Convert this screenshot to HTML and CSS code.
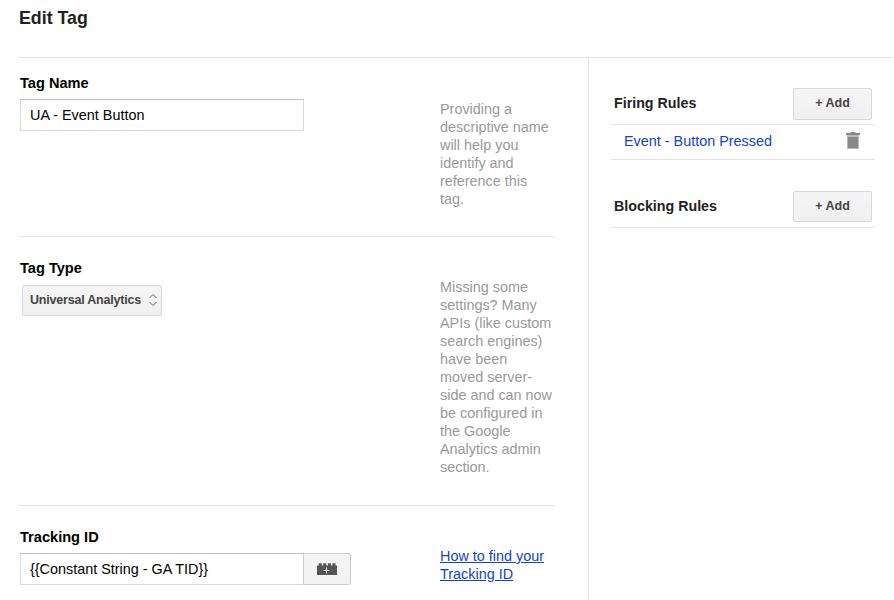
FILE: index.html
```html
<!DOCTYPE html>
<html lang="en">
<head>
<meta charset="utf-8">
<title>Edit Tag</title>
<link rel="stylesheet" href="styles.css">
</head>
<body>
<div class="page">
  <header class="page-header"><h1>Edit Tag</h1></header>
  <div class="columns">
    <main class="form">
      <section class="section section-name">
        <div class="field">
          <h2 class="label">Tag Name</h2>
          <div class="input">UA - Event Button</div>
        </div>
        <p class="help">Providing a descriptive name will help you identify and reference this tag.</p>
      </section>
      <section class="section section-type">
        <div class="field">
          <h2 class="label">Tag Type</h2>
          <button class="button select" type="button">Universal Analytics
            <svg class="arrows" width="8" height="14" viewBox="0 0 8 14"><path d="M.5 5 4 1.5 7.5 5M.5 9 4 12.5 7.5 9"/></svg>
          </button>
        </div>
        <p class="help">Missing some settings? Many APIs (like custom search engines) have been moved server-side and can now be configured in the Google Analytics admin section.</p>
      </section>
      <section class="section section-tracking">
        <div class="field">
          <h2 class="label">Tracking ID</h2>
          <div class="input-group">
            <div class="input">{{Constant String - GA TID}}</div>
            <button class="macro" type="button" aria-label="Insert macro">
              <svg width="20" height="12" viewBox="0 0 20 12"><path class="brick" d="M0 2.5h1.7V.3h3v2.2h1.6V.3h3v2.2h1.6V.3h3v2.2h1.6V.3h3v2.2H20V12H0z"/><path class="plus" d="M9.5 4.5v6M6.5 7.5h6"/></svg>
            </button>
          </div>
        </div>
        <p class="help"><a class="help-link" href="#">How to find your Tracking ID</a></p>
      </section>
    </main>
    <aside class="rules">
      <div class="rule-head"><h2>Firing Rules</h2><button class="button add" type="button">+ Add</button></div>
      <div class="rule-item">
        <a href="#">Event - Button Pressed</a>
        <svg class="trash" width="14" height="17" viewBox="0 0 14 17"><path d="M0 1h4.5V0h5v1H14v2H0z"/><path class="rim" d="M1 3h12v14H1z"/><path d="M2 5h10v11H2z"/></svg>
      </div>
      <div class="rule-head rule-head-blocking"><h2>Blocking Rules</h2><button class="button add" type="button">+ Add</button></div>
    </aside>
  </div>
</div>
</body>
</html>
```

FILE: styles.css
```css
* { box-sizing: border-box; }

body {
  margin: 0;
  background: #fff;
  color: #000;
  font: 14.4px/18px "Liberation Sans", Arial, sans-serif;
}

h1, h2, p { margin: 0; }

.page {
  height: 600px;
  padding-left: 19px;
  display: flex;
  flex-direction: column;
  overflow: hidden;
}

.page-header {
  height: 58px;
  margin-right: 1px;
  padding-top: 8px;
  border-bottom: 1px solid #e2e2e2;
}

h1 {
  color: #222;
  font-size: 17.8px;
  line-height: 20px;
}

.columns {
  flex: 1;
  min-height: 0;
  display: flex;
}

.form { width: 536px; }

.section {
  display: flex;
  border-bottom: 1px solid #e2e2e2;
  padding-top: 22px;
}

.section-name { height: 179px; padding-top: 16px; }
.section-type { height: 269px; }
.section-tracking { border-bottom: 0; }

.field { width: 421px; padding-left: 1px; }

.label {
  font-size: 14.6px;
  line-height: 18px;
  margin-bottom: 7px;
}

.help {
  width: 114px;
  padding-top: 19px;
  color: #999;
}

.section-name .help { padding-top: 26px; }

.input {
  width: 284px;
  height: 32px;
  padding: 0 9px;
  border: 1px solid #d9d9d9;
  border-top-color: #c0c0c0;
  line-height: 30px;
  white-space: nowrap;
}

.input-group { display: flex; }

.macro {
  width: 48px;
  height: 32px;
  margin-left: -1px;
  padding: 0;
  display: flex;
  align-items: center;
  justify-content: center;
  border: 1px solid #ccc;
  border-radius: 0 2px 2px 0;
  background: #f3f3f3;
}

.brick { fill: #555; }

.plus {
  fill: none;
  stroke: #eee;
}

.button {
  display: flex;
  align-items: center;
  border: 1px solid #d8d8d8;
  border-radius: 2px;
  background: linear-gradient(#f5f5f5, #f0f0f0);
  color: #444;
  font: bold 12.5px/16px "Liberation Sans", Arial, sans-serif;
  white-space: nowrap;
}

.select {
  width: 140px;
  height: 31px;
  margin: 8px 0 0 2px;
  padding: 0 4px 2px 7px;
  justify-content: space-between;
  letter-spacing: -0.2px;
}

.arrows {
  fill: none;
  stroke: #666;
}

.rules {
  width: 287px;
  margin-left: 33px;
  padding: 29px 0 0 22px;
  border-left: 1px solid #e2e2e2;
}

.rule-head {
  height: 38px;
  padding: 1px 3px 4px;
  display: flex;
  align-items: flex-start;
  justify-content: space-between;
  border-bottom: 1px solid #e2e2e2;
}

.rule-head h2 {
  color: #222;
  font-size: 14.25px;
  line-height: 30px;
}

.add {
  width: 79px;
  height: 32px;
  justify-content: center;
  padding: 0 0 2px;
}

.rule-item {
  height: 35px;
  padding: 0 15px 2px 13px;
  display: flex;
  align-items: center;
  justify-content: space-between;
  border-bottom: 1px solid #e2e2e2;
}

.rule-head-blocking { margin-top: 30px; }
.rule-head-blocking .add { height: 31px; }

.trash { position: relative; top: -1px; fill: #888; }
.rim { fill: #bbb; }

a { color: #14c; text-decoration: none; }
.help-link { text-decoration: underline; }
```
